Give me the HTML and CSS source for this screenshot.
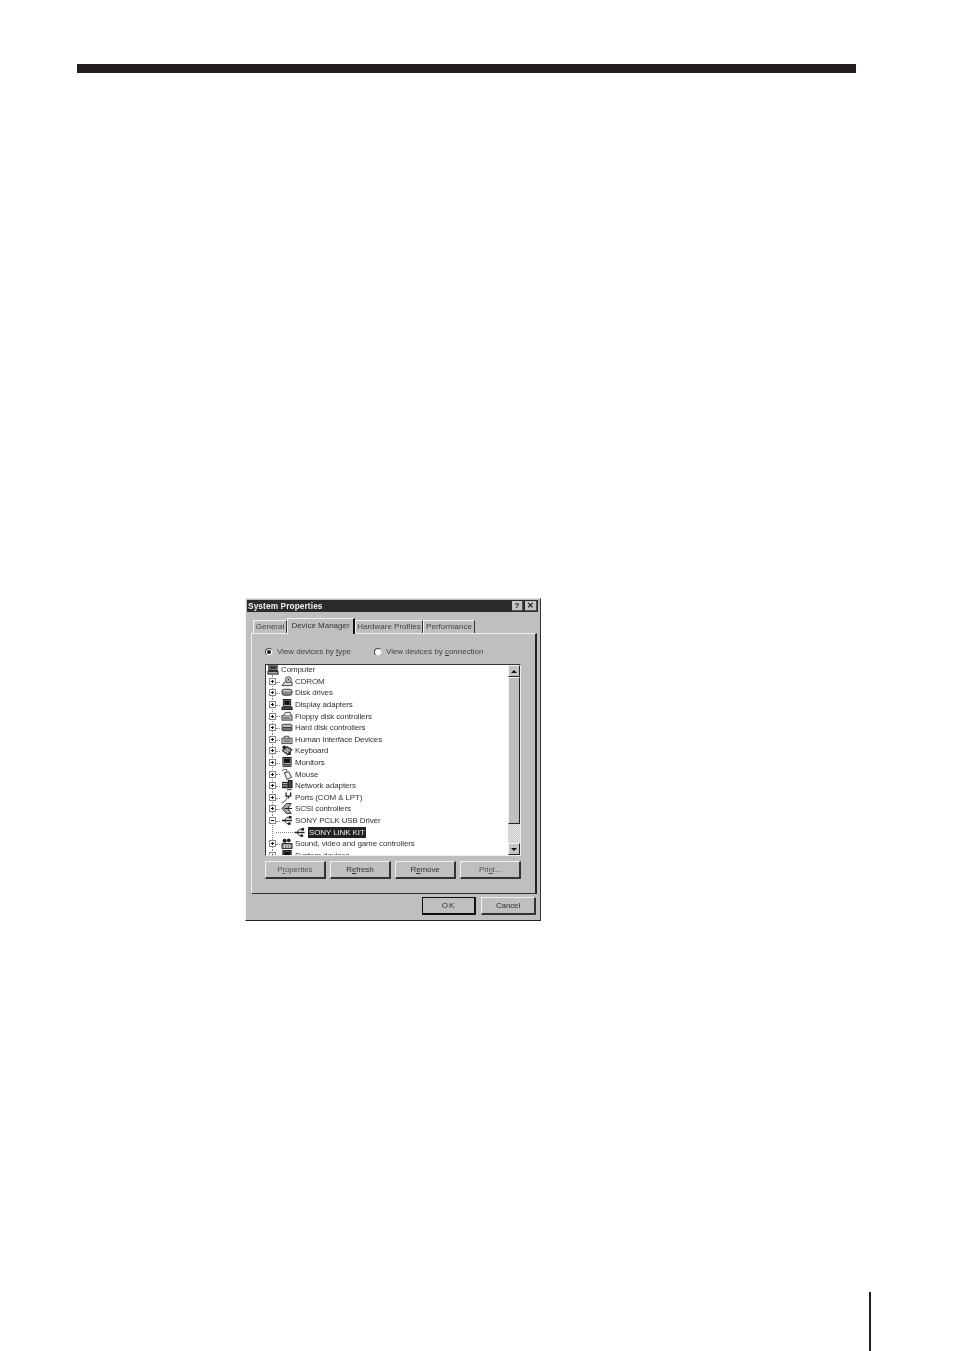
FILE: index.html
```html
<!DOCTYPE html>
<html lang="en">
<head>
<meta charset="utf-8">
<title>System Properties</title>
<link rel="stylesheet" href="styles.css">
</head>
<body>
<svg class="defs" width="0" height="0" aria-hidden="true">
  <symbol id="i-computer" viewBox="0 0 12 12"><rect x="1.500" y="0.500" width="9" height="6.500" fill="#888" stroke="#111"/><rect x="3" y="2" width="6" height="3.500" fill="#333"/><rect x="0.500" y="8" width="11" height="3" fill="#aaa" stroke="#111"/></symbol>
  <symbol id="i-cdrom" viewBox="0 0 12 12"><path d="M0.500 10.500 L3.500 6.500 H11.500 V10.500Z" fill="#ddd" stroke="#333"/><circle cx="7.500" cy="4" r="3.200" fill="#ddd" stroke="#333"/><circle cx="7.500" cy="4" r="1" fill="#222"/></symbol>
  <symbol id="i-disk" viewBox="0 0 12 12"><rect x="0.500" y="2.500" width="11" height="6.500" rx="2.500" fill="#888" stroke="#333"/><path d="M2 4H10" stroke="#ddd" stroke-width="1.400"/></symbol>
  <symbol id="i-display" viewBox="0 0 12 12"><rect x="2" y="0.500" width="8" height="7.500" fill="#ccc" stroke="#111"/><rect x="3" y="1.500" width="6" height="5" fill="#111"/><rect x="0.500" y="9" width="11" height="2.500" fill="#555" stroke="#111"/></symbol>
  <symbol id="i-floppy" viewBox="0 0 12 12"><rect x="0.500" y="5" width="11" height="5" fill="#bbb" stroke="#444"/><path d="M2.500 5 L4 1.500H9.500L10.500 5" fill="#eee" stroke="#444"/><path d="M2 7.500H9" stroke="#444"/></symbol>
  <symbol id="i-hard" viewBox="0 0 12 12"><rect x="0.500" y="2.500" width="11" height="4" rx="1.500" fill="#bbb" stroke="#333"/><rect x="0.500" y="6" width="11" height="3.500" rx="1" fill="#777" stroke="#333"/></symbol>
  <symbol id="i-hid" viewBox="0 0 12 12"><rect x="0.500" y="4.500" width="11" height="6" fill="#ddd" stroke="#444"/><path d="M2 6.500H10M2 8.500H10M3 4.500V2.500H8V4.500" stroke="#444" fill="none"/></symbol>
  <symbol id="i-keyboard" viewBox="0 0 12 12"><path d="M0.500 6 L6 1.500 L11.500 5 L7 11Z" fill="#777" stroke="#111"/><path d="M3 6l4 2M5 4.500l4 2" stroke="#eee"/><circle cx="3" cy="2.500" r="2" fill="#222"/><circle cx="9" cy="9.500" r="1.500" fill="#222"/></symbol>
  <symbol id="i-monitor" viewBox="0 0 12 12"><rect x="1.500" y="0.500" width="9" height="7.500" fill="#ccc" stroke="#111"/><rect x="2.500" y="1.500" width="7" height="5" fill="#111"/><rect x="1" y="9" width="10" height="2" fill="#444"/></symbol>
  <symbol id="i-mouse" viewBox="0 0 12 12"><path d="M0.500 2 C3 -0.500 8 -0.500 5 3" fill="none" stroke="#333"/><path d="M3 4 L8 3 L11 9 L6 11.500Z" fill="#eee" stroke="#333"/></symbol>
  <symbol id="i-network" viewBox="0 0 12 12"><rect x="0.500" y="2" width="6.500" height="7" fill="#222"/><path d="M1 4H6.500M1 6.500H6.500" stroke="#ddd"/><rect x="7.500" y="0.500" width="4" height="8" fill="#444" stroke="#111"/><path d="M6 10.500H11" stroke="#222"/></symbol>
  <symbol id="i-port" viewBox="0 0 12 12"><path d="M0.500 11.500 C3 11.500 5 9 6 6" fill="none" stroke="#444"/><path d="M5 0.500V4.500H10V0.500M7.500 4.500V7" fill="none" stroke="#222" stroke-width="1.400"/></symbol>
  <symbol id="i-scsi" viewBox="0 0 12 12"><path d="M0.500 6 L5.500 0.500 H10.500 L7 6 L10.500 11.500 H5.500Z" fill="#aaa" stroke="#222"/><path d="M3 6H11.500" stroke="#222" stroke-width="1.200"/></symbol>
  <symbol id="i-usb" viewBox="0 0 12 12"><path d="M0.500 6H11.500" stroke="#222" stroke-width="1.600"/><path d="M3 6 L6 2.500H9M3 6L6 9.500H8" fill="none" stroke="#222"/><rect x="8" y="1" width="3" height="3" fill="#222"/><circle cx="8.500" cy="9.500" r="1.600" fill="#222"/></symbol>
  <symbol id="i-sound" viewBox="0 0 12 12"><circle cx="3.500" cy="3" r="2.300" fill="#222"/><circle cx="8" cy="2.500" r="2" fill="#222"/><path d="M0.500 6H11.500V11.500H0.500Z" fill="#888" stroke="#222"/><path d="M3 7V11M6 7V11M9 7V11" stroke="#eee"/></symbol>
  <symbol id="i-system" viewBox="0 0 12 12"><rect x="1.500" y="0.500" width="9" height="7.500" fill="#555" stroke="#111"/><rect x="3" y="2" width="6" height="4" fill="#111"/><rect x="0.500" y="9" width="11" height="2" fill="#777" stroke="#111"/></symbol>
</svg>

<div class="top-rule"></div>

<main class="dialog">
  <header class="titlebar">
    <span class="title-text">System Properties</span>
    <span class="title-btn">?</span>
    <span class="title-btn close">✕</span>
  </header>

  <nav class="tabs">
    <span class="tab tab-general">General</span>
    <span class="tab tab-active">Device Manager</span>
    <span class="tab tab-hardware">Hardware Profiles</span>
    <span class="tab tab-performance">Performance</span>
  </nav>

  <section class="panel">
    <div class="radios">
      <label class="radio radio-type"><span class="dot on"></span><span>View devices by <u>t</u>ype</span></label>
      <label class="radio"><span class="dot"></span><span>View devices by <u>c</u>onnection</span></label>
    </div>

    <div class="listbox">
      <div class="tree">
        <div class="row root"><svg class="icon"><use href="#i-computer"/></svg><span class="label">Computer</span></div>
        <div class="row"><span class="exp"></span><svg class="icon"><use href="#i-cdrom"/></svg><span class="label">CDROM</span></div>
        <div class="row"><span class="exp"></span><svg class="icon"><use href="#i-disk"/></svg><span class="label">Disk drives</span></div>
        <div class="row"><span class="exp"></span><svg class="icon"><use href="#i-display"/></svg><span class="label">Display adapters</span></div>
        <div class="row"><span class="exp"></span><svg class="icon"><use href="#i-floppy"/></svg><span class="label">Floppy disk controllers</span></div>
        <div class="row"><span class="exp"></span><svg class="icon"><use href="#i-hard"/></svg><span class="label">Hard disk controllers</span></div>
        <div class="row"><span class="exp"></span><svg class="icon"><use href="#i-hid"/></svg><span class="label">Human Interface Devices</span></div>
        <div class="row"><span class="exp"></span><svg class="icon"><use href="#i-keyboard"/></svg><span class="label">Keyboard</span></div>
        <div class="row"><span class="exp"></span><svg class="icon"><use href="#i-monitor"/></svg><span class="label">Monitors</span></div>
        <div class="row"><span class="exp"></span><svg class="icon"><use href="#i-mouse"/></svg><span class="label">Mouse</span></div>
        <div class="row"><span class="exp"></span><svg class="icon"><use href="#i-network"/></svg><span class="label">Network adapters</span></div>
        <div class="row"><span class="exp"></span><svg class="icon"><use href="#i-port"/></svg><span class="label">Ports (COM &amp; LPT)</span></div>
        <div class="row"><span class="exp"></span><svg class="icon"><use href="#i-scsi"/></svg><span class="label">SCSI controllers</span></div>
        <div class="row"><span class="exp minus"></span><svg class="icon"><use href="#i-usb"/></svg><span class="label">SONY PCLK USB Driver</span></div>
        <div class="row child"><svg class="icon"><use href="#i-usb"/></svg><span class="label selected">SONY LINK KIT</span></div>
        <div class="row"><span class="exp"></span><svg class="icon"><use href="#i-sound"/></svg><span class="label">Sound, video and game controllers</span></div>
        <div class="row"><span class="exp"></span><svg class="icon"><use href="#i-system"/></svg><span class="label">System devices</span></div>
      </div>
      <div class="scrollbar">
        <span class="sb-btn"><span class="arrow-up"></span></span>
        <span class="sb-thumb"></span>
        <span class="sb-track"></span>
        <span class="sb-btn"><span class="arrow-down"></span></span>
      </div>
    </div>

    <div class="actions">
      <span class="btn muted">P<u>r</u>operties</span>
      <span class="btn">R<u>e</u>fresh</span>
      <span class="btn">R<u>e</u>move</span>
      <span class="btn muted">Pri<u>n</u>t...</span>
    </div>
  </section>

  <footer class="footer">
    <span class="btn btn-default">OK</span>
    <span class="btn btn-cancel">Cancel</span>
  </footer>
</main>

<div class="page-rule"></div>
</body>
</html>
```

FILE: styles.css
```css
* { box-sizing: border-box; }
html, body { margin: 0; padding: 0; background: #fff; }
body { width: 954px; height: 1351px; overflow: hidden; font-family: "Liberation Sans", Arial, sans-serif; }
.defs { display: block; height: 0; }

.top-rule { width: 779px; height: 9px; margin: 64px 0 0 77px; background: #231f20; }
.page-rule { width: 2px; height: 59px; margin: 371px 0 0 869px; background: #231f20; }

.dialog {
  width: 296px; height: 323px; margin: 525px 0 0 245px;
  background: #bfbfbf; color: #2a2a2a;
  border-left: 1px solid #f4f4f4; border-top: 1px solid #e6e6e6;
  border-right: 1px solid #333; border-bottom: 1px solid #222;
  font-size: 8px; line-height: 11px; letter-spacing: -0.12px;
  padding: 1px 1px 0 1px;
  filter: blur(0.35px);
}
.titlebar {
  height: 12px; margin-right: 1px; padding: 0 1px 0 1px;
  background: #2b2b2b; color: #f2f2f2;
  display: flex; align-items: center; gap: 2px;
}
.title-text { flex: 1; font-weight: 700; font-size: 8.3px; letter-spacing: 0.1px; }
.title-btn {
  width: 11px; height: 10px; background: #c4c4c4; color: #111;
  font-size: 8px; font-weight: 700; line-height: 10px; text-align: center;
  border-right: 1px solid #555; border-bottom: 1px solid #555;
}
.close { width: 12px; }

.tabs { display: flex; align-items: flex-end; height: 21px; padding-left: 6px; position: relative; z-index: 1; letter-spacing: 0; }
.tab {
  height: 13px; text-align: center; white-space: nowrap;
  border-top: 1px solid #f0f0f0; border-left: 1px solid #f0f0f0;
  border-right: 1px solid #333; color: #444;
}
.tab-general { width: 34px; }
.tab-active { width: 68px; height: 16px; background: #bfbfbf; margin-bottom: -1px; padding-top: 1px; border-right-width: 2px; border-right-color: #111; color: #333; }
.tab-hardware { width: 68px; }
.tab-performance { width: 52px; }

.panel {
  width: 286px; height: 261px; margin-left: 4px; padding: 12px 14px 0 13px;
  border-left: 1px solid #f0f0f0; border-top: 1px solid #f0f0f0;
  border-right: 2px solid #222; border-bottom: 1px solid #333;
}
.radios { display: flex; height: 18px; align-items: flex-start; }
.radio { display: flex; align-items: center; gap: 4px; color: #444; white-space: nowrap; letter-spacing: -0.03px; }
.radio-type { width: 109px; }
.dot {
  width: 8px; height: 8px; border-radius: 50%; background: #fff;
  border: 1px solid #444; border-right-color: #ccc; border-bottom-color: #ccc;
  display: flex; align-items: center; justify-content: center;
}
.dot.on::after { content: ""; width: 4px; height: 4px; border-radius: 50%; background: #111; }

.listbox {
  width: 256px; height: 192px; display: flex; background: #fff;
  border-top: 1px solid #333; border-left: 1px solid #333;
  border-right: 1px solid #eee; border-bottom: 1px solid #eee;
}
.tree { flex: 1; height: 190px; overflow: hidden; }
.row { height: 11.6px; display: flex; align-items: center; padding-left: 3px; position: relative; top: -1px; white-space: nowrap; }
.row::before { content: ""; position: absolute; left: 6px; top: -1px; bottom: 0; border-left: 1px dotted #888; }
.row::after { content: ""; position: absolute; left: 10px; top: 6px; width: 4px; border-top: 1px dotted #888; }
.row.root::before, .row.root::after { display: none; }
.exp {
  width: 7px; height: 7px; margin-right: 5px; border: 1px solid #888; position: relative; z-index: 1;
  background:
    linear-gradient(#111, #111) center / 3px 1px no-repeat,
    linear-gradient(#111, #111) center / 1px 3px no-repeat,
    #fff;
}
.exp.minus { background: linear-gradient(#111, #111) center / 3px 1px no-repeat, #fff; }
.icon { width: 12px; height: 11px; margin-right: 2px; flex: none; position: relative; z-index: 1; }
.row.root { padding-left: 1px; }
.child { padding-left: 28px; }
.child::after { width: 17px; }
.child .icon { width: 11px; margin-right: 3px; }
.label { color: #333; }
.selected { background: #222; color: #eee; padding: 0 1px; height: 11px; }

.scrollbar { width: 12px; height: 190px; display: flex; flex-direction: column; }
.sb-btn {
  height: 12px; background: #c4c4c4; display: flex; align-items: center; justify-content: center;
  border-top: 1px solid #f2f2f2; border-left: 1px solid #f2f2f2;
  border-right: 1px solid #222; border-bottom: 1px solid #222;
}
.arrow-up { border: 3px solid transparent; border-top: 0; border-bottom: 3px solid #111; }
.arrow-down { border: 3px solid transparent; border-bottom: 0; border-top: 3px solid #111; }
.sb-thumb {
  height: 147px; background: #bfbfbf;
  border-top: 1px solid #f2f2f2; border-left: 1px solid #f2f2f2;
  border-right: 1px solid #222; border-bottom: 1px solid #222;
}
.sb-track { flex: 1; background: #dcdcdc repeating-conic-gradient(#c2c2c2 0 25%, #ececec 0 50%) 0 0 / 2px 2px; }

.actions { display: flex; gap: 4.5px; margin-top: 5px; }
.btn {
  width: 61px; height: 18px; display: flex; align-items: center; justify-content: center;
  border-top: 1px solid #f0f0f0; border-left: 1px solid #f0f0f0;
  border-right: 2px solid #333; border-bottom: 2px solid #333;
  color: #333; white-space: nowrap;
}
.muted { color: #555; }

.footer { display: flex; justify-content: flex-end; gap: 5px; margin-top: 3px; padding-right: 3px; }
.btn-default { width: 54px; border: 1px solid #111; border-right-width: 2px; border-bottom-width: 2px; letter-spacing: 1px; }
.btn-cancel { width: 55px; }
```
